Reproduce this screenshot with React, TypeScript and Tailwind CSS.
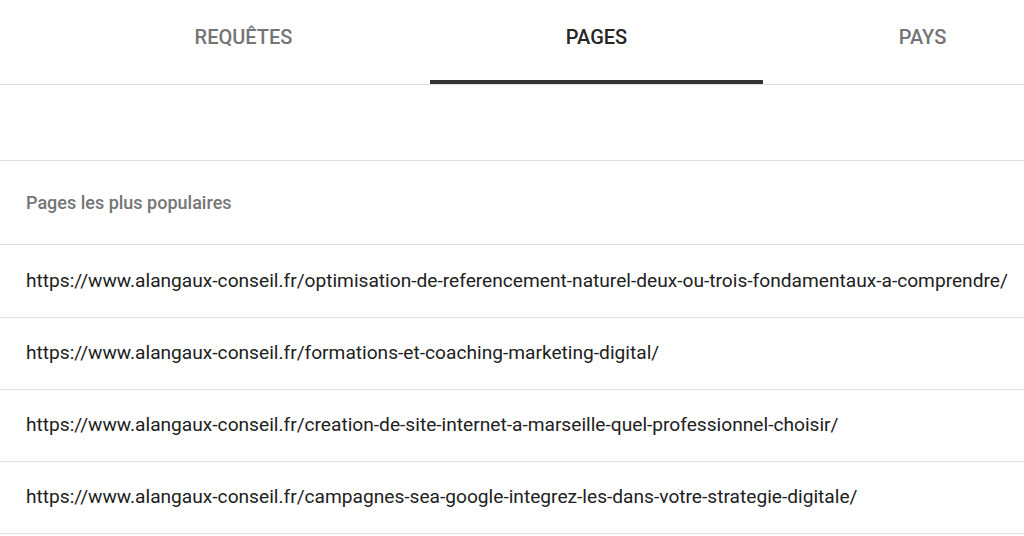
import { useState } from "react";

const tabs = [
  { id: "requetes", label: "Requêtes", width: "w-[373px]" },
  { id: "pages", label: "Pages", width: "w-[333px]" },
  { id: "pays", label: "Pays", width: "w-[319px]" },
];

const pages = [
  "https://www.alangaux-conseil.fr/optimisation-de-referencement-naturel-deux-ou-trois-fondamentaux-a-comprendre/",
  "https://www.alangaux-conseil.fr/formations-et-coaching-marketing-digital/",
  "https://www.alangaux-conseil.fr/creation-de-site-internet-a-marseille-quel-professionnel-choisir/",
  "https://www.alangaux-conseil.fr/campagnes-sea-google-integrez-les-dans-votre-strategie-digitale/",
];

export default function App() {
  const [active, setActive] = useState("pages");

  return (
    <div className="w-[1024px] h-[536px] overflow-hidden bg-white font-['Roboto','Liberation_Sans',sans-serif]">
      {/* tabs */}
      <div className="flex h-[85px] border-b border-[#e0e0e0] pl-[57px] overflow-hidden">
        {tabs.map((t) => (
          <button
            key={t.id}
            onClick={() => setActive(t.id)}
            className={`relative shrink-0 ${t.width} h-full flex justify-center pt-[23px] text-[20px] font-medium uppercase leading-[28px] ${
              active === t.id ? "text-[#262626]" : "text-[#757575]"
            }`}
          >
            {t.label}
            {active === t.id && (
              <span className="absolute left-0 right-0 bottom-0 h-[4px] bg-[#333333]" />
            )}
          </button>
        ))}
      </div>

      <div className="h-[76px] border-b border-[#e0e0e0]" />

      <div className="h-[84px] flex items-center px-[26px] border-b border-[#e0e0e0] text-[18px] font-medium text-[#757575]">
        Pages les plus populaires
      </div>

      {pages.map((url, i) => (
        <div
          key={url}
          className={`${i === 0 ? "h-[73px]" : "h-[72px]"} flex items-center px-[26px] border-b border-[#e0e0e0] text-[19.15px] text-[#212121] whitespace-nowrap`}
        >
          {url}
        </div>
      ))}
    </div>
  );
}
